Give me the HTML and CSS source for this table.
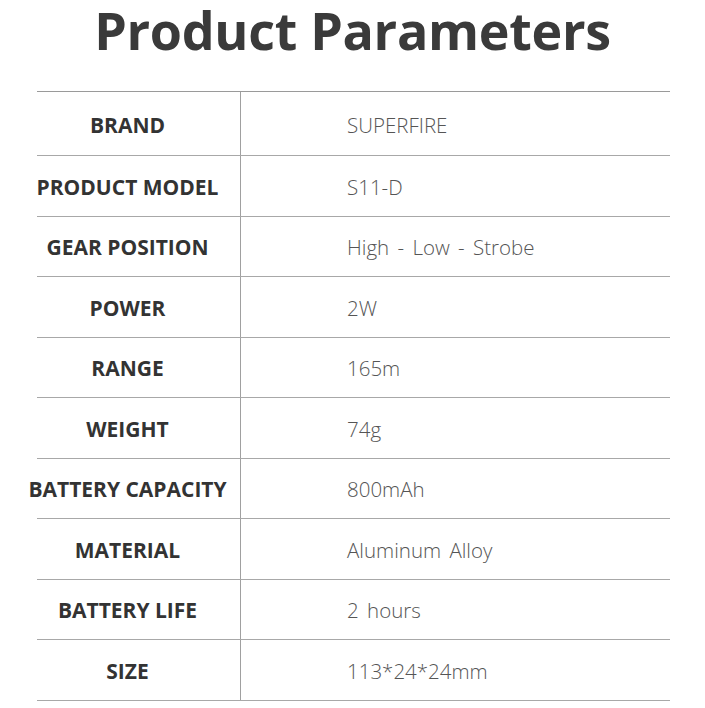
FILE: index.html
```html
<!DOCTYPE html>
<html>
<head>
<meta charset="utf-8">
<link rel="stylesheet" href="styles.css">
</head>
<body>
<div class="page">
  <h1 class="title">Product Parameters</h1>
  <div class="table">
    <div class="row first"><div class="label">BRAND</div><div class="value">SUPERFIRE</div></div>
    <div class="row"><div class="label">PRODUCT MODEL</div><div class="value">S11-D</div></div>
    <div class="row"><div class="label">GEAR POSITION</div><div class="value">High - Low - Strobe</div></div>
    <div class="row"><div class="label">POWER</div><div class="value">2W</div></div>
    <div class="row"><div class="label">RANGE</div><div class="value">165m</div></div>
    <div class="row"><div class="label">WEIGHT</div><div class="value">74g</div></div>
    <div class="row"><div class="label">BATTERY CAPACITY</div><div class="value">800mAh</div></div>
    <div class="row"><div class="label">MATERIAL</div><div class="value">Aluminum Alloy</div></div>
    <div class="row"><div class="label">BATTERY LIFE</div><div class="value">2 hours</div></div>
    <div class="row"><div class="label">SIZE</div><div class="value">113*24*24mm</div></div>
  </div>
</div>
</body>
</html>
```
FILE: styles.css
```css
html, body {
  margin: 0;
  padding: 0;
  background: #ffffff;
}
.page {
  width: 705px;
  height: 708px;
  overflow: hidden;
}
.title {
  margin: 0 0 31px;
  height: 60px;
  text-align: center;
  line-height: 60px;
  font-family: "Open Sans", "Noto Sans", sans-serif;
  font-weight: 700;
  font-size: 52px;
  letter-spacing: -0.3px;
  color: #3a3a3a;
}
.table {
  margin-left: 37px;
  width: 633px;
  border-top: 1.5px solid #9a9a9a;
}
.row {
  display: grid;
  grid-template-columns: 204px 1fr;
  height: 60.5px;
  border-bottom: 1.5px solid #a8a8a8;
  box-sizing: border-box;
}
.row.first {
  height: 64px;
}
.label {
  display: flex;
  justify-content: center;
  align-items: center;
  padding-right: 22px;
  border-right: 1.5px solid #a0a0a0;
  white-space: nowrap;
  font-family: "Open Sans", "Noto Sans", sans-serif;
  font-weight: 700;
  font-size: 21px;
  color: #333333;
  padding-top: 2px;
}
.value {
  display: flex;
  align-items: center;
  padding-left: 106px;
  padding-top: 2px;
  font-family: "Open Sans", "Noto Sans", sans-serif;
  font-weight: 300;
  font-size: 20.5px;
  word-spacing: 3px;
  color: #555555;
  white-space: nowrap;
}
```
